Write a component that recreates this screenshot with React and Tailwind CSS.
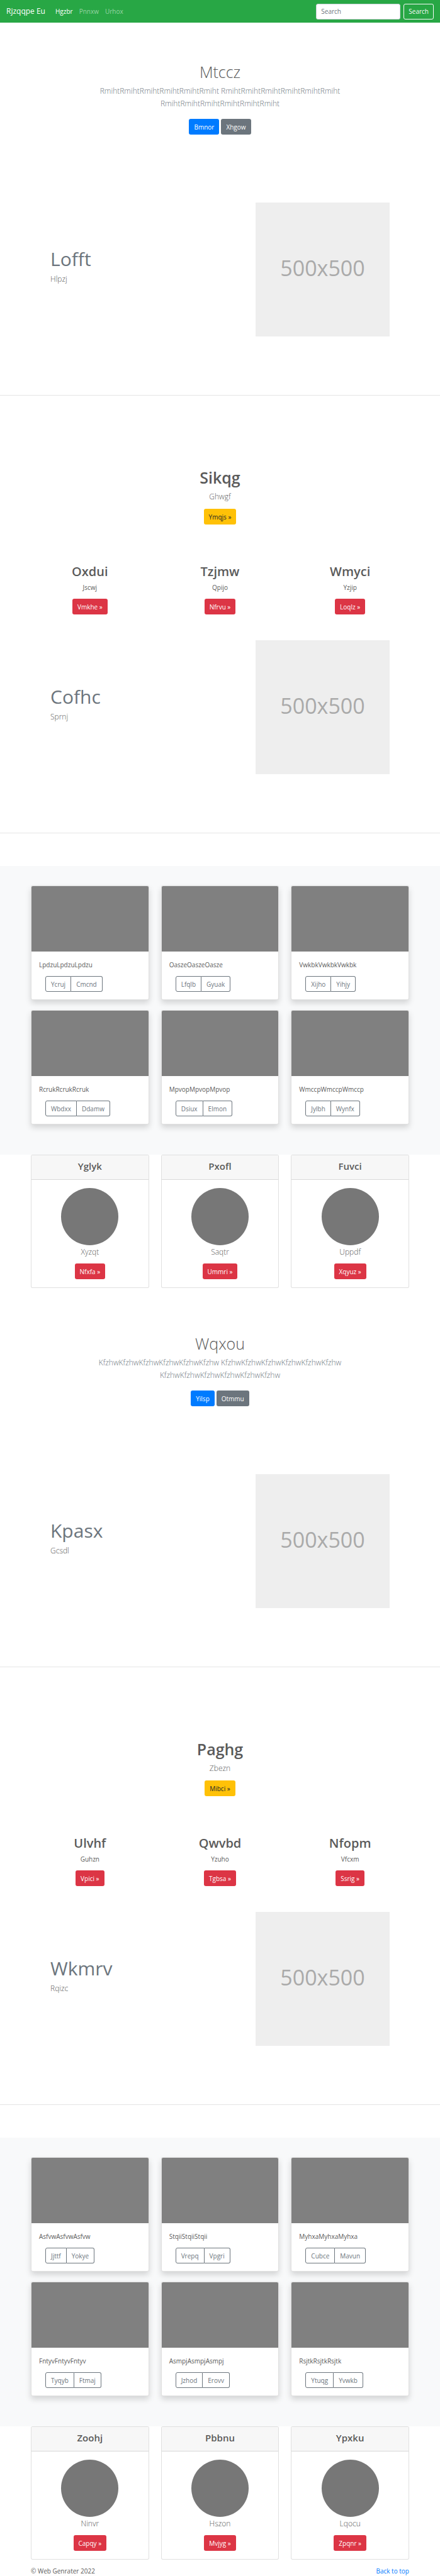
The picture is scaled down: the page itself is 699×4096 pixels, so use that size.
import React from "react";

const blocks = [
  {
    hero: { title: "Mtccz", word: "RmihtRmihtRmihtRmihtRmihtRmiht", primary: "Bmnor", secondary: "Xhgow" },
    first: { title: "Lofft", text: "Hlpzj" },
    intro: { title: "Sikqg", text: "Ghwgf", action: "Ymqjs »" },
    columns: [
      { title: "Oxdui", text: "Jscwj", action: "Vmkhe »" },
      { title: "Tzjmw", text: "Qpijo", action: "Nfrvu »" },
      { title: "Wmyci", text: "Yzjip", action: "Loqlz »" },
    ],
    second: { title: "Cofhc", text: "Sprnj" },
    album: [
      { text: "LpdzuLpdzuLpdzu", actions: ["Ycruj", "Cmcnd"] },
      { text: "OaszeOaszeOasze", actions: ["Lfqlb", "Gyuak"] },
      { text: "VwkbkVwkbkVwkbk", actions: ["Xijho", "Yihjy"] },
      { text: "RcrukRcrukRcruk", actions: ["Wbdxx", "Ddamw"] },
      { text: "MpvopMpvopMpvop", actions: ["Dsiux", "Elmon"] },
      { text: "WmccpWmccpWmccp", actions: ["Jylbh", "Wynfx"] },
    ],
    profiles: [
      { title: "Yglyk", text: "Xyzqt", action: "Nfxfa »" },
      { title: "Pxofl", text: "Saqtr", action: "Ummri »" },
      { title: "Fuvci", text: "Uppdf", action: "Xqyuz »" },
    ],
  },
  {
    hero: { title: "Wqxou", word: "KfzhwKfzhwKfzhwKfzhwKfzhwKfzhw", primary: "Yilsp", secondary: "Otmmu" },
    first: { title: "Kpasx", text: "Gcsdl" },
    intro: { title: "Paghg", text: "Zbezn", action: "Mibci »" },
    columns: [
      { title: "Ulvhf", text: "Guhzn", action: "Vpici »" },
      { title: "Qwvbd", text: "Yzuho", action: "Tgbsa »" },
      { title: "Nfopm", text: "Vfcxm", action: "Ssrig »" },
    ],
    second: { title: "Wkmrv", text: "Rqizc" },
    album: [
      { text: "AsfvwAsfvwAsfvw", actions: ["Jjttf", "Yokye"] },
      { text: "StqiiStqiiStqii", actions: ["Vrepq", "Vpgri"] },
      { text: "MyhxaMyhxaMyhxa", actions: ["Cubce", "Mavun"] },
      { text: "FntyvFntyvFntyv", actions: ["Tyqyb", "Ftmaj"] },
      { text: "AsmpjAsmpjAsmpj", actions: ["Jzhod", "Erovv"] },
      { text: "RsjtkRsjtkRsjtk", actions: ["Ytuqg", "Yvwkb"] },
    ],
    profiles: [
      { title: "Zoohj", text: "Ninvr", action: "Capqy »" },
      { title: "Pbbnu", text: "Hszon", action: "Mvjyg »" },
      { title: "Ypxku", text: "Lqocu", action: "Zpqnr »" },
    ],
  },
];

const tones = {
  primary: "bg-[#007bff] text-white",
  secondary: "bg-[#6c757d] text-white",
  warning: "bg-[#ffc107] text-[#212529]",
  danger: "bg-[#dc3545] text-white",
};

function Button({ tone, children }) {
  return (
    <a href="#" className={`inline-flex h-[25px] items-center rounded-[3px] px-2 text-[10px] leading-4 ${tones[tone]}`}>
      {children}
    </a>
  );
}

function Navbar() {
  return (
    <nav className="flex h-9 items-center justify-between bg-[#28a745] px-[10px]">
      <div className="flex items-center">
        <a href="#" className="mr-4 text-[12px] leading-5 text-white">Rjzqqpe Eu</a>
        <ul className="flex gap-[10px] text-[10px] leading-4">
          <li><a href="#" className="text-white">Hgzbr</a></li>
          <li><a href="#" className="text-white/50">Pnnxw</a></li>
          <li><a href="#" className="text-white/50">Urhox</a></li>
        </ul>
      </div>
      <form className="flex gap-[5px]">
        <input
          type="text"
          aria-label="Search"
          placeholder="Search"
          className="h-[25px] w-[134px] rounded-[3px] border border-[#ced4da] bg-white px-[7px] text-[10px] leading-4 text-[#495057] placeholder:text-[#6c757d]"
        />
        <button type="button" className="h-[25px] rounded-[3px] border border-[#f8f9fa] px-[7px] text-[10px] leading-4 text-[#f8f9fa]">
          Search
        </button>
      </form>
    </nav>
  );
}

function Hero({ title, word, primary, secondary }) {
  return (
    <section className="flex flex-col items-center pt-[63px] pb-[108px] text-center">
      <h1 className="text-[25px] leading-[31px] font-light">{title}</h1>
      <p className="mt-[5px] max-w-[400px] text-[12px] leading-5 font-light text-[#6c757d]">
        {word} {word} {word}
      </p>
      <div className="mt-[14px] flex gap-[3px]">
        <Button tone="primary">{primary}</Button>
        <Button tone="secondary">{secondary}</Button>
      </div>
    </section>
  );
}

function Featurette({ title, text }) {
  return (
    <section className="flex items-center justify-between px-20">
      <div className="pb-[10px]">
        <h2 className="text-[30px] leading-[34px] text-[#6c757d]">{title}</h2>
        <p className="mt-[5px] text-[12px] leading-[19px] font-light">{text}</p>
      </div>
      <div className="flex size-[213px] items-center justify-center bg-[#eeeeee] pb-[5px] text-[34px] leading-none text-[#aaaaaa]">
        500x500
      </div>
    </section>
  );
}

function Intro({ title, text, action }) {
  return (
    <section className="flex flex-col items-center pt-[115px] text-center">
      <h1 className="text-[25px] leading-[31px] font-semibold">{title}</h1>
      <p className="mt-[5px] mb-[10px] text-[12px] leading-[19px] font-light">{text}</p>
      <Button tone="warning">{action}</Button>
    </section>
  );
}

function Columns({ items }) {
  return (
    <section className="grid grid-cols-3 gap-[19px] px-[49px] pt-[62px] pb-[41px] text-center">
      {items.map((item) => (
        <div key={item.title} className="flex flex-col items-center">
          <h2 className="text-[20px] leading-[25px] font-semibold">{item.title}</h2>
          <p className="mt-[5px] mb-[10px] text-[10px] leading-4">{item.text}</p>
          <Button tone="danger">{item.action}</Button>
        </div>
      ))}
    </section>
  );
}

function Album({ items }) {
  return (
    <section className="grid grid-cols-3 gap-x-[19px] gap-y-4 bg-[#f8f9fa] px-[49px] pt-[31px] pb-12">
      {items.map((item) => (
        <article key={item.text} className="overflow-hidden rounded-[3px] border border-black/12 bg-white shadow-[0_5px_10px_rgba(0,0,0,0.15)]">
          <div className="h-[104px] bg-[#808080]" />
          <div className="px-3 pt-[13px] pb-3">
            <p className="text-[10px] leading-4">{item.text}</p>
            <div className="mt-[10px] ml-[10px] flex text-[10px] leading-4 text-[#6c757d]">
              <button type="button" className="h-[25px] rounded-l-[3px] border border-[#6c757d] px-2">{item.actions[0]}</button>
              <button type="button" className="h-[25px] rounded-r-[3px] border border-l-0 border-[#6c757d] px-2">{item.actions[1]}</button>
            </div>
          </div>
        </article>
      ))}
    </section>
  );
}

function Profiles({ items }) {
  return (
    <section className="grid grid-cols-3 gap-[19px] px-[49px] pb-[10px] text-center">
      {items.map((item) => (
        <article key={item.title} className="overflow-hidden rounded-[3px] border border-black/12 bg-white">
          <h4 className="border-b border-black/12 bg-[#f7f7f7] pt-2 pb-[11px] text-[15px] leading-[19px] font-semibold">{item.title}</h4>
          <div className="flex flex-col items-center pt-[13px] pb-[13px]">
            <div className="size-[91px] rounded-full bg-[#777777]" />
            <p className="mt-px mb-[9px] text-[12px] leading-[19px] font-light">{item.text}</p>
            <Button tone="danger">{item.action}</Button>
          </div>
        </article>
      ))}
    </section>
  );
}

export default function App() {
  return (
    <div className="bg-white font-['Open_Sans','Noto_Sans',sans-serif] text-[10px] leading-4 text-[#5a5a5a]">
      <Navbar />
      <main>
        {blocks.map((block) => (
          <React.Fragment key={block.hero.title}>
            <Hero {...block.hero} />
            <Featurette {...block.first} />
            <hr className="mt-[93px] border-black/10" />
            <Intro {...block.intro} />
            <Columns items={block.columns} />
            <Featurette {...block.second} />
            <hr className="mt-[93px] mb-[52px] border-black/10" />
            <Album items={block.album} />
            <Profiles items={block.profiles} />
          </React.Fragment>
        ))}
      </main>
      <footer className="flex justify-between px-[49px]">
        <p>© Web Genrater 2022</p>
        <a href="#" className="text-[#007bff]">Back to top</a>
      </footer>
    </div>
  );
}
